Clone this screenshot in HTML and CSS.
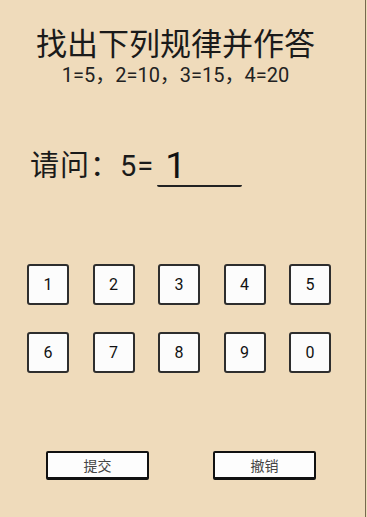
FILE: index.html
```html
<!DOCTYPE html>
<html lang="zh">
<head>
<meta charset="utf-8">
<link rel="stylesheet" href="styles.css">
</head>
<body>
<div class="screen">
  <h1 class="title">找出下列规律并作答</h1>
  <p class="rule">1=5，2=10，3=15，4=20</p>
  <div class="question">
    <span class="ask">请问：5=</span>
    <span class="answer">1</span>
  </div>
  <div class="keys">
    <div class="key">1</div>
    <div class="key">2</div>
    <div class="key">3</div>
    <div class="key">4</div>
    <div class="key">5</div>
    <div class="key">6</div>
    <div class="key">7</div>
    <div class="key">8</div>
    <div class="key">9</div>
    <div class="key">0</div>
  </div>
  <div class="actions">
    <div class="btn">提交</div>
    <div class="btn">撤销</div>
  </div>
</div>
</body>
</html>
```

FILE: styles.css
```css
html, body {
  margin: 0;
  padding: 0;
  background: #efdbbb;
}
body {
  width: 367px;
  height: 517px;
  overflow: hidden;
  font-family: Roboto, "Noto Sans CJK SC", sans-serif;
  color: #1c1c1c;
}
.screen {
  width: 365px;
  height: 517px;
  border-right: 1px solid #76684f;
  display: flex;
  flex-direction: column;
}
.title {
  margin: 26px 0 0 0;
  padding-right: 14px;
  font-size: 31px;
  font-weight: 400;
  line-height: 31px;
  text-align: center;
  font-family: "Noto Sans CJK SC", sans-serif;
  color: #1a1a1a;
}
.rule {
  margin: 7px 0 0 0;
  padding-right: 14px;
  font-size: 20px;
  line-height: 22px;
  text-align: center;
  color: #222;
}
.question {
  margin: 61px 0 0 30px;
  display: flex;
  align-items: flex-end;
  height: 40px;
}
.ask {
  font-size: 29px;
  line-height: 30px;
  letter-spacing: 1px;
  color: #1a1a1a;
  margin-bottom: 6px;
}
.answer {
  width: 77px;
  margin-left: 3px;
  padding-left: 8px;
  font-size: 37px;
  line-height: 38px;
  color: #111;
  border-bottom: 2px solid #222;
  border-radius: 0 0 2px 2px;
}
.keys {
  margin: 77px 0 0 27px;
  width: 304px;
  display: grid;
  grid-template-columns: repeat(5, 42px);
  justify-content: space-between;
  row-gap: 27px;
}
.key {
  box-sizing: border-box;
  width: 42px;
  height: 41px;
  background: #fcfcfc;
  border: 2px solid #2e2e2e;
  border-radius: 3px;
  display: flex;
  align-items: center;
  justify-content: center;
  font-size: 16px;
  font-weight: 400;
  color: #111;
}
.actions {
  margin: 78px 0 0 46px;
  width: 270px;
  display: flex;
  justify-content: space-between;
}
.btn {
  box-sizing: border-box;
  width: 103px;
  height: 29px;
  background: #fdfdfd;
  border: 2px solid #111;
  border-bottom-width: 3px;
  border-radius: 2px;
  display: flex;
  align-items: center;
  justify-content: center;
  font-size: 14px;
  color: #444;
  font-family: "Noto Sans CJK SC", sans-serif;
}
```
